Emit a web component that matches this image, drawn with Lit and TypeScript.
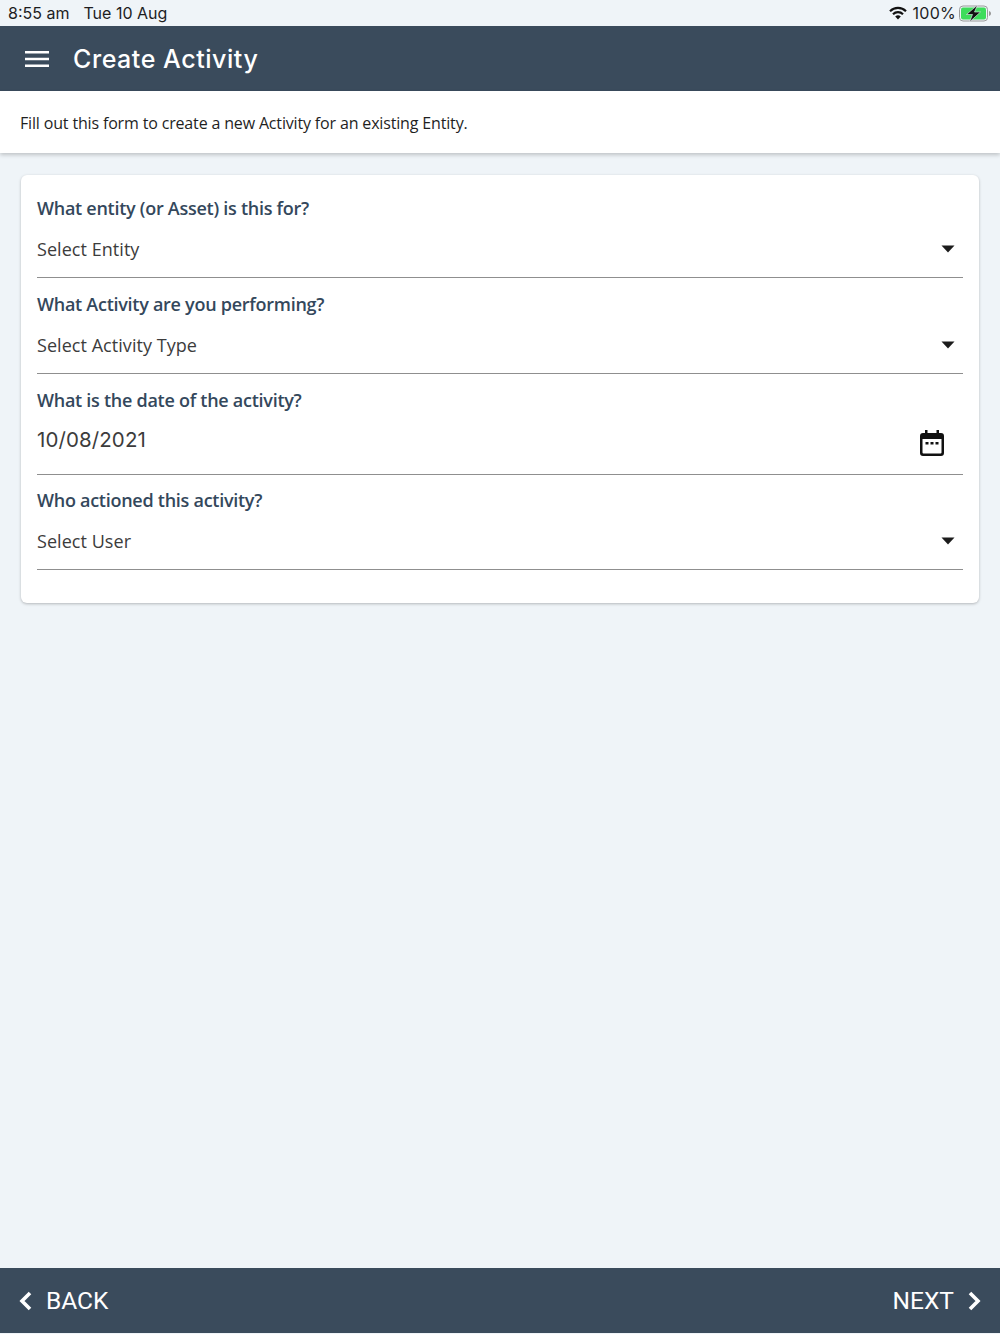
import { LitElement, html, css } from 'lit';
import { customElement } from 'lit/decorators.js';

const caret = html`<svg class="caret" width="14" height="8" viewBox="0 0 14 8"><path d="M0.5 0.5h13L7 7.5z" fill="#1c1c1c"/></svg>`;

@customElement('app-root')
export class AppRoot extends LitElement {
  static styles = css`
    * {
      margin: 0;
      padding: 0;
      box-sizing: border-box;
    }

    :host {
      display: flex;
      flex-direction: column;
      height: 1334px;
      background: #eff4f8;
      font-family: 'Open Sans', sans-serif;
    }

    .status {
      height: 26px;
      display: flex;
      align-items: center;
      padding: 0 8px;
      font-family: Inter, sans-serif;
      font-size: 16px;
      color: #1d1d1f;
    }

    .status__time {
      margin-right: 14px;
    }

    .status__right {
      margin-left: auto;
      display: flex;
      align-items: center;
      gap: 6px;
      letter-spacing: 0.25px;
    }

    .status__right svg:last-child {
      margin-left: -3px;
    }

    .header {
      height: 65px;
      background: #3a4b5c;
      display: flex;
      align-items: center;
      padding-left: 25px;
      gap: 24px;
      color: #fff;
      font-family: Inter, sans-serif;
      font-size: 25px;
      font-weight: 500;
      letter-spacing: 0.55px;
    }

    .intro {
      height: 62px;
      background: #fff;
      display: flex;
      align-items: center;
      padding: 2px 0 0 20px;
      font-size: 16px;
      font-weight: 500;
      letter-spacing: -0.16px;
      color: #1f1f1f;
      box-shadow: 0 2px 4px rgba(0, 0, 0, 0.2);
    }

    .card {
      margin: 22px 21px 0;
      height: 428px;
      padding: 18px 16px 0;
      background: #fff;
      border-radius: 6px;
      box-shadow: 0 1px 3px rgba(0, 0, 0, 0.25);
    }

    .field {
      margin-bottom: 11px;
    }

    .field--date {
      margin-bottom: 10px;
    }

    .field__label {
      height: 30px;
      line-height: 30px;
      font-size: 18px;
      font-weight: 600;
      color: #34485c;
      letter-spacing: -0.27px;
    }

    .field__control {
      height: 55px;
      display: flex;
      align-items: center;
      justify-content: space-between;
      border-bottom: 1px solid #8f8f8f;
      font-size: 18px;
      letter-spacing: 0.05px;
      color: #3c3c3c;
      padding: 0 8px 2px 0;
    }

    .field--date .field__control {
      height: 60px;
      align-items: flex-start;
      padding: 12px 19px 0 0;
      font-family: Inter, sans-serif;
      font-size: 20.5px;
      letter-spacing: 0.1px;
    }

    .field--date svg {
      margin-top: 3px;
    }

    .spacer {
      flex: 1;
    }

    .footer {
      height: 65px;
      margin-bottom: 1px;
      background: #3a4b5c;
      display: flex;
      align-items: center;
      justify-content: space-between;
      padding: 0 19px;
      color: #fff;
      font-family: Roboto, sans-serif;
      font-size: 24.5px;
    }

    .footer__btn {
      display: flex;
      align-items: center;
      gap: 14px;
    }
  `;

  private renderField(label: string, placeholder: string) {
    return html`
      <div class="field">
        <div class="field__label">${label}</div>
        <div class="field__control"><span>${placeholder}</span>${caret}</div>
      </div>
    `;
  }

  render() {
    return html`
      <div class="status">
        <span class="status__time">8:55 am</span><span>Tue 10 Aug</span>
        <div class="status__right">
          <svg width="18" height="14" viewBox="0 0 18 14">
            <path d="M1 5.200a11.500 11.500 0 0 1 16 0" fill="none" stroke="#111" stroke-width="2.200"/>
            <path d="M4 8.200a7.200 7.200 0 0 1 10 0" fill="none" stroke="#111" stroke-width="2.200"/>
            <path d="M9 13.500l-2.800-3a4 4 0 0 1 5.600 0z" fill="#111"/>
          </svg>
          <span>100%</span>
          <svg width="33" height="17" viewBox="0 0 33 17">
            <rect x="0.500" y="1" width="28" height="15" rx="3.500" fill="none" stroke="#9a9a9a"/>
            <rect x="2" y="2.500" width="25" height="12" rx="2" fill="#3ddc5b"/>
            <path d="M30 6c1.500.400 2 1.400 2 2.500s-.500 2.100-2 2.500z" fill="#9a9a9a"/>
            <path d="M18.500 0L7.500 9.500h6L10.500 17l11-10h-6z" fill="#111" stroke="#eff4f8" stroke-width="0.600"/>
          </svg>
        </div>
      </div>

      <div class="header">
        <svg width="24" height="16" viewBox="0 0 24 16">
          <path d="M0 1.250h24M0 8h24M0 14.750h24" stroke="#fff" stroke-width="2.500"/>
        </svg>
        <span>Create Activity</span>
      </div>

      <div class="intro">Fill out this form to create a new Activity for an existing Entity.</div>

      <div class="card">
        ${this.renderField('What entity (or Asset) is this for?', 'Select Entity')}
        ${this.renderField('What Activity are you performing?', 'Select Activity Type')}
        <div class="field field--date">
          <div class="field__label">What is the date of the activity?</div>
          <div class="field__control">
            <span>10/08/2021</span>
            <svg width="24" height="26" viewBox="0 0 24 26">
              <path d="M5 0h2.500v3h9V0H19v3h2a3 3 0 0 1 3 3v17a3 3 0 0 1-3 3H3a3 3 0 0 1-3-3V6a3 3 0 0 1 3-3h2zM2.500 9v13.500a1 1 0 0 0 1 1h17a1 1 0 0 0 1-1V9z" fill="#111" fill-rule="evenodd"/>
              <rect x="5.500" y="12" width="3" height="2.500" fill="#111"/>
              <rect x="10.500" y="12" width="3" height="2.500" fill="#111"/>
              <rect x="15.500" y="12" width="3" height="2.500" fill="#111"/>
            </svg>
          </div>
        </div>
        ${this.renderField('Who actioned this activity?', 'Select User')}
      </div>

      <div class="spacer"></div>

      <div class="footer">
        <div class="footer__btn">
          <svg width="13" height="20" viewBox="0 0 13 20"><path d="M11 2L3 10l8 8" fill="none" stroke="#fff" stroke-width="3.600"/></svg>
          <span>BACK</span>
        </div>
        <div class="footer__btn">
          <span>NEXT</span>
          <svg width="13" height="20" viewBox="0 0 13 20"><path d="M2 2l8 8-8 8" fill="none" stroke="#fff" stroke-width="3.600"/></svg>
        </div>
      </div>
    `;
  }
}
